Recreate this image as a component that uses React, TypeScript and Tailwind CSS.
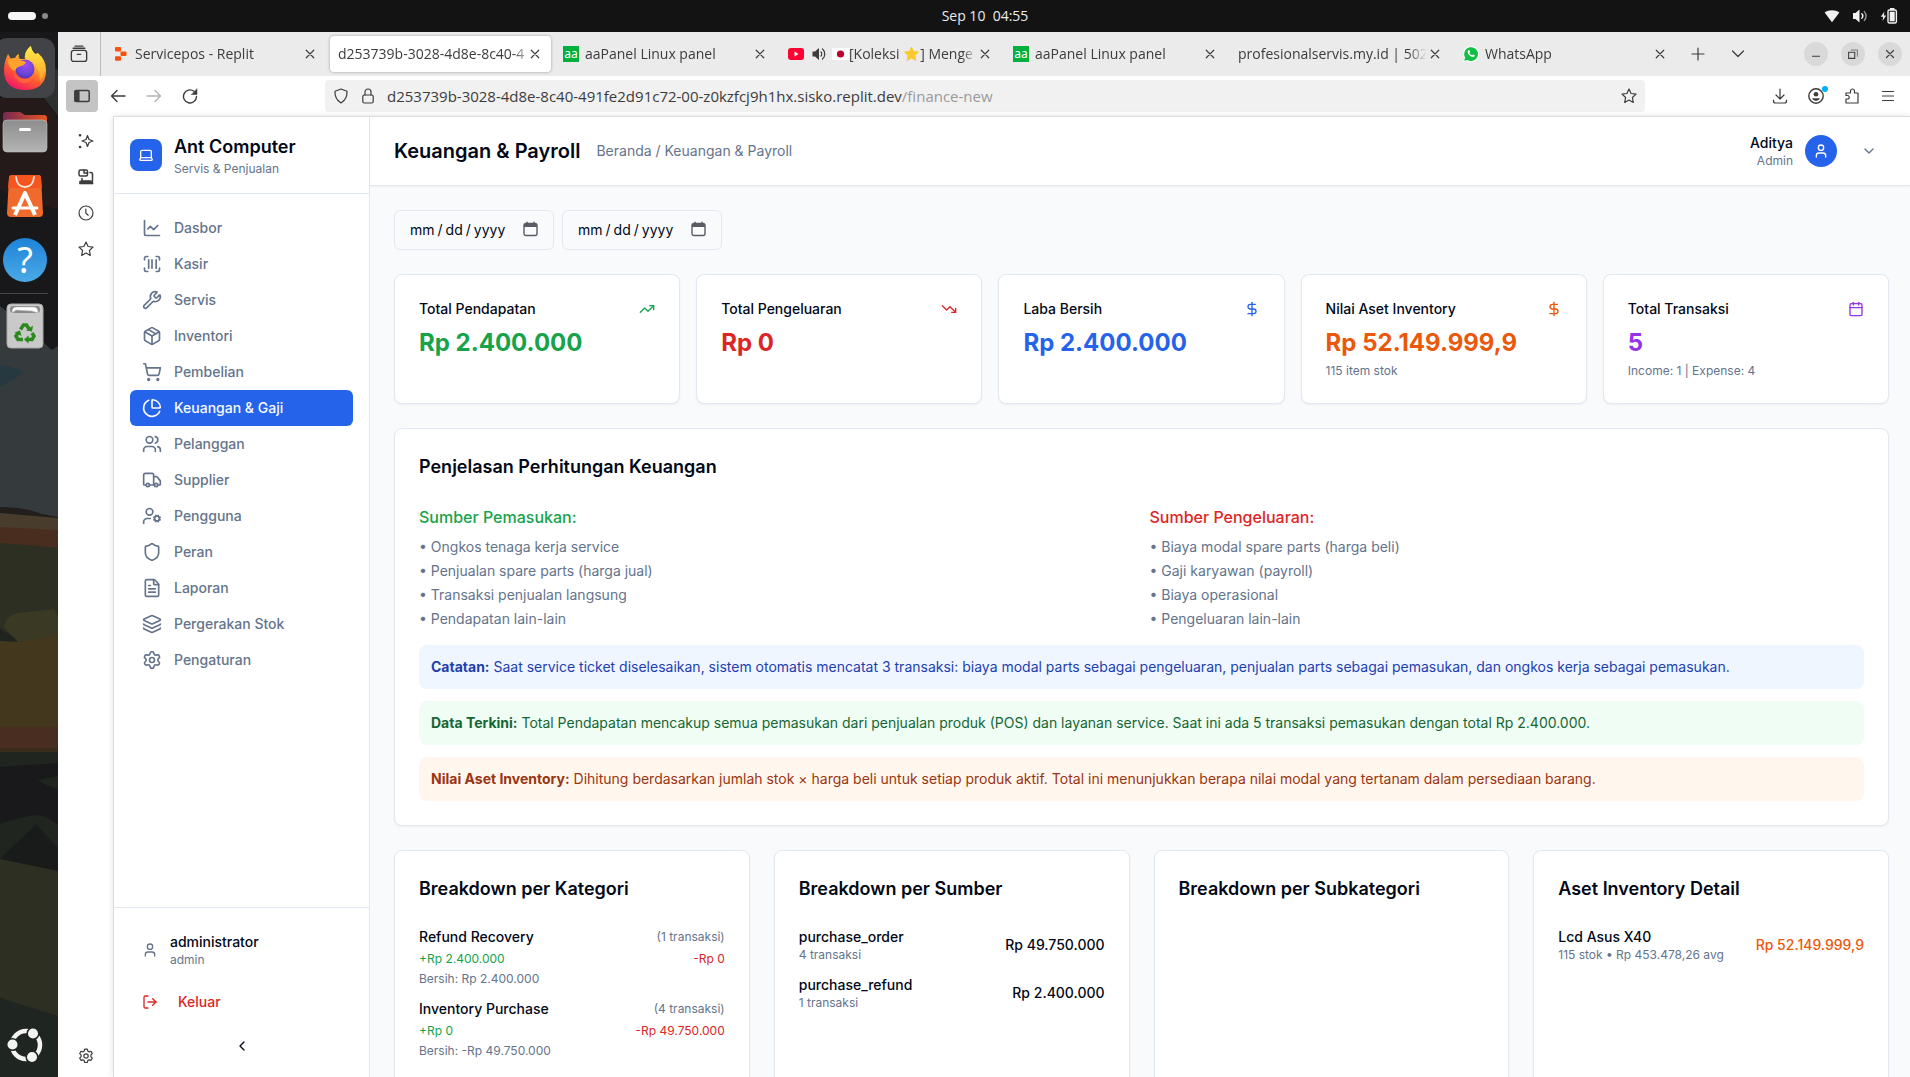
import type { ReactNode } from "react";
import {
  Calendar,
  ChartLine,
  ChartPie,
  ChevronDown,
  ChevronLeft,
  DollarSign,
  FileText,
  Laptop,
  Layers,
  LogOut,
  Package,
  ScanBarcode,
  Settings,
  Shield,
  ShoppingCart,
  TrendingDown,
  TrendingUp,
  Truck,
  User,
  UserCog,
  Users,
  Wrench,
} from "lucide-react";

/* ---------- Desktop: top bar and dock ---------- */

function TopBar() {
  return (
    <header className="relative flex h-8 shrink-0 items-center justify-between bg-[#131313] px-2 text-white">
      <button aria-label="Activities" className="flex items-center gap-1.5">
        <span className="h-2 w-7 rounded-full bg-[#f6f6f6]" />
        <span className="size-1.5 rounded-full bg-[#8a8a8a]" />
      </button>
      <button className="absolute left-1/2 -translate-x-1/2 whitespace-pre pl-[60px] font-['Open_Sans','Noto_Sans',sans-serif] text-sm text-[#ececec]">
        Sep 10{"  "}04:55
      </button>
      <button aria-label="System menu" className="flex items-center gap-3 pr-1">
        <svg width="16" height="16" viewBox="0 0 16 16" fill="#f2f2f2">
          <path d="M.6 4.600C4.800 1.400 11.200 1.400 15.400 4.600L8 14.200z" />
        </svg>
        <svg width="16" height="16" viewBox="0 0 16 16" fill="none" stroke="#f2f2f2" strokeLinecap="round">
          <path d="M1 5h2.500L7.500 1.500v13L3.500 11H1z" fill="#f2f2f2" stroke="none" />
          <path d="M9.800 5.800c1.200 1.200 1.200 3.200 0 4.400" strokeWidth="1.400" />
          <path d="M12.300 3.600c2.300 2.500 2.300 6.300 0 8.800" strokeWidth="1.400" opacity=".6" />
        </svg>
        <svg width="18" height="16" viewBox="0 0 18 16" fill="#f2f2f2">
          <path d="M4.500 3.500L.8 8.800h2.400L2.500 13l3.700-5.500H3.800z" />
          <rect x="8" y="2" width="8.400" height="13" rx="1.500" fill="none" stroke="#f2f2f2" strokeWidth="1.400" />
          <rect x="9.700" y="3.700" width="5" height="9.600" />
          <rect x="10" y="0" width="4.400" height="2" />
        </svg>
      </button>
    </header>
  );
}

function Wallpaper() {
  return (
    <svg className="absolute inset-0 h-full w-full" viewBox="0 32 58 1045" preserveAspectRatio="xMidYMin slice" aria-hidden="true">
      <rect y="32" width="58" height="1045" fill="#18181a" />
      <path d="M0 98h44l14 22v90L0 190z" fill="#231a19" />
      <path d="M40 60l18 10v46L44 98z" fill="#2c3130" />
      <path d="M0 306l52 44 6-4v180L0 515z" fill="#353b3c" />
      <path d="M0 365q14 2 24 7-10 8-24 15z" fill="#263840" />
      <path d="M0 507q24 0 42 7l16 3v16H0z" fill="#211e1b" />
      <path d="M0 513l58 5v14H0z" fill="#483d2c" />
      <path d="M0 527l58 3v18H0z" fill="#492e20" />
      <path d="M0 543l40 3 18 2v130H0z" fill="#2c2f22" />
      <path d="M0 628l20 14h38v12H0z" fill="#20241e" />
      <path d="M4 627q2-12 14-14l36-4 4 8v22l-40 3z" fill="#3a3924" />
      <path d="M0 641l20 1 36-7 2 2v92H0z" fill="#43381e" />
      <path d="M0 727h58v22H0z" fill="#482d20" />
      <path d="M0 748h58v4H0z" fill="#3a2c1d" />
      <path d="M0 752h58v140H0z" fill="#20251f" />
      <path d="M0 767l58-4v13l-20 4q6 5 20 9v36q-12-10-22-10Q20 817 0 824z" fill="#19191b" />
      <path d="M0 860l8 2 10 4-18 8z" fill="#38382a" />
      <path d="M36 824l22 24v24L0 859z" fill="#191b1a" />
      <path d="M0 859l58 12v146L0 998z" fill="#2d2f22" />
      <path d="M0 998l58 18v61H0z" fill="#1f2520" />
    </svg>
  );
}

function FirefoxIcon() {
  return (
    <svg width="44" height="46" viewBox="0 0 44 46">
      <defs>
        <linearGradient id="ffBody" x1=".8" y1="0" x2=".25" y2="1">
          <stop offset="0" stopColor="#fff44f" />
          <stop offset=".35" stopColor="#ffb52b" />
          <stop offset=".65" stopColor="#ff5a2f" />
          <stop offset="1" stopColor="#f0126e" />
        </linearGradient>
        <radialGradient id="ffGlobe" cx=".55" cy=".3" r=".8">
          <stop offset="0" stopColor="#a14bf0" />
          <stop offset=".6" stopColor="#6b45d8" />
          <stop offset="1" stopColor="#4b2aa6" />
        </radialGradient>
        <linearGradient id="ffTail" x1="0" y1="0" x2="0" y2="1">
          <stop offset="0" stopColor="#fff14a" />
          <stop offset="1" stopColor="#ff9a2b" />
        </linearGradient>
      </defs>
      <path
        d="M5 9l3 5q2-1 4-1 1-3 4-4-1 3 1 5h5q-1-5 2-9 2-3 4-4 0 4 4 8l3-1q8 7 8 17 0 20-21 20Q1 45 1 25 1 17 5 9z"
        fill="url(#ffBody)"
      />
      <path d="M22 13q0-7 6-12 0 4 4 8 8 7 9 15 0 7-4 12 0-16-15-23z" fill="url(#ffTail)" />
      <circle cx="22" cy="24" r="9.500" fill="url(#ffGlobe)" />
      <path d="M5 15q4-3 9-1l9 3q-1 3-5 4-5 1-6 5Q5 24 5 15z" fill="#ffa22e" />
      <path d="M10 26q4 9 13 8 6 0 9-6-2 10-12 10-8-1-10-12z" fill="#ff7139" opacity=".7" />
    </svg>
  );
}

function FilesIcon() {
  return (
    <svg width="46" height="42" viewBox="0 0 46 42">
      <defs>
        <linearGradient id="flBack" x1="0" x2="1">
          <stop offset="0" stopColor="#772953" />
          <stop offset="1" stopColor="#e95420" />
        </linearGradient>
        <linearGradient id="flFront" x1="0" y1="0" x2="0" y2="1">
          <stop offset="0" stopColor="#8d8d8d" />
          <stop offset="1" stopColor="#b4b4b4" />
        </linearGradient>
      </defs>
      <path d="M1 4q0-3 3-3h14l5 3h19q3 0 3 3v16H1z" fill="url(#flBack)" />
      <rect x="1" y="9" width="44" height="32" rx="4" fill="url(#flFront)" stroke="#c4c4c4" strokeWidth=".6" />
      <rect x="17" y="17" width="12" height="3" rx="1.500" fill="#fff" />
    </svg>
  );
}

function SoftwareIcon() {
  return (
    <svg width="38" height="44" viewBox="0 0 38 44">
      <path d="M6 1h26q3 0 3 3l2 35q0 4-4 4H5q-4 0-4-4L3 4q0-3 3-3z" fill="#f06a2d" />
      <path d="M6 1h26q3 0 3 3l1 10H2L3 4q0-3 3-3z" fill="#f4561d" />
      <path d="M10 3q1 10 9 10t9-10" fill="none" stroke="#fbe6dc" strokeWidth="1.800" strokeLinecap="round" />
      <g stroke="#fff" fill="none">
        <path d="M9 41l10-22 10 22" strokeWidth="4" strokeLinejoin="round" />
        <path d="M7 34h24" strokeWidth="3" strokeLinecap="round" />
      </g>
    </svg>
  );
}

function HelpIcon() {
  return (
    <span className="grid size-11 place-items-center rounded-full bg-linear-to-b from-[#1d83d8] to-[#4aa9e6] font-['Noto_Sans','Open_Sans',sans-serif] text-[36px] leading-none text-white">
      ?
    </span>
  );
}

function TrashIcon() {
  return (
    <svg width="38" height="46" viewBox="0 0 38 46">
      <rect x="1" y="1" width="36" height="44" rx="4" fill="#c9c9c9" stroke="#a9a9a9" />
      <rect x="4" y="3" width="30" height="7" rx="3" fill="#8a8a8a" />
      <path d="M6 10q0-6 4-6h18q4 0 4 6l-6-2-16-1z" fill="#fff" stroke="#bbb" strokeWidth=".6" />
      <g fill="none" stroke="#2a8a1c" strokeWidth="3.500">
        <path d="M14.500 26.500l3-4.500h3l2.500 4" />
        <path d="M26 30l2 3-2 3.500h-4" />
        <path d="M17 36.500h-5l-2-3.500 2-3" />
      </g>
      <path d="M20 27.500l6 1 1-6zM22.500 32.500v8l-4.500-4zM8.500 29.500l5.500-2 1.500 5.500z" fill="#2a8a1c" />
    </svg>
  );
}

function UbuntuIcon() {
  return (
    <svg width="36" height="36" viewBox="0 0 36 36">
      <circle cx="19" cy="18" r="14" fill="none" stroke="#f3f3f3" strokeWidth="4.500" />
      <g fill="#f3f3f3" stroke="#1f2520" strokeWidth="1.500">
        <circle cx="5.500" cy="17.500" r="5.800" />
        <circle cx="26" cy="6.500" r="5.800" />
        <circle cx="25" cy="30" r="5.800" />
      </g>
    </svg>
  );
}

function DockItem({ label, active, children }: { label: string; active?: boolean; children: ReactNode }) {
  return (
    <button aria-label={label} className="flex h-16 w-[50px] items-center justify-center">
      <span className={active ? "flex h-15 w-15 shrink-0 items-center justify-center rounded-xl bg-[#414346]" : "flex items-center justify-center"}>
        {children}
      </span>
    </button>
  );
}

function Dock() {
  return (
    <aside className="relative w-[58px] shrink-0 overflow-hidden">
      <Wallpaper />
      <div className="relative flex h-full flex-col pt-1">
        <DockItem label="Firefox" active><FirefoxIcon /></DockItem>
        <DockItem label="Files"><FilesIcon /></DockItem>
        <DockItem label="App Center"><SoftwareIcon /></DockItem>
        <DockItem label="Help"><HelpIcon /></DockItem>
        <hr className="mt-px w-12 border-[#46464a]" />
        <DockItem label="Trash"><TrashIcon /></DockItem>
        <div className="mt-auto">
          <DockItem label="Show Apps"><UbuntuIcon /></DockItem>
        </div>
      </div>
    </aside>
  );
}

/* ---------- Browser chrome ---------- */

function Glyph({ size = 16, children }: { size?: number; children: ReactNode }) {
  return (
    <svg
      width={size}
      height={size}
      viewBox="0 0 16 16"
      fill="none"
      stroke="currentColor"
      strokeWidth="1.200"
      strokeLinecap="round"
      strokeLinejoin="round"
      className="shrink-0"
      aria-hidden="true"
    >
      {children}
    </svg>
  );
}

const starPath = "M8 1l2.100 4.500 4.900.6-3.600 3.400.9 4.900L8 12l-4.300 2.400.9-4.900L1 6.100l4.900-.6z";
const gearPath =
  "M6.700 1.200h2.600l.5 1.900 1.300.8 1.900-.6 1.300 2.300-1.400 1.300v1.800l1.400 1.400-1.300 2.200-1.900-.5-1.300.8-.5 1.900H6.700l-.5-1.900-1.300-.8-1.900.5-1.300-2.200 1.400-1.400V6.900L1.700 5.600 3 3.300l1.900.6 1.300-.8z";

const replitIcon = (
  <span className="flex size-4 shrink-0 items-center justify-center">
    <svg width="12" height="14" viewBox="0 0 12 14">
      <g fill="#f9500a">
        <rect x="0" y="0" width="6" height="4.500" rx="1" />
        <rect x="5.500" y="4.600" width="6" height="4.500" rx="1" />
        <rect x="0" y="9.300" width="6" height="4.500" rx="1" />
      </g>
    </svg>
  </span>
);

const aaIcon = (
  <span className="flex size-4 shrink-0 items-center justify-center bg-[#00b03c] font-['Noto_Sans','Open_Sans',sans-serif] text-xs leading-none text-white">
    aa
  </span>
);

const youtubeIcons = (
  <span className="flex shrink-0 items-center gap-2">
    <svg width="16" height="12" viewBox="0 0 16 12">
      <rect width="16" height="12" rx="3" fill="#f03" />
      <path d="M6.500 3.500v5L10.500 6z" fill="#fff" />
    </svg>
    <svg width="14" height="14" viewBox="0 0 14 14" fill="none" stroke="#3c3c3c" strokeLinecap="round">
      <path d="M.5 4.500h2.500L7 1v12L3 9.500H.5z" fill="#3c3c3c" stroke="none" />
      <path d="M9 5c1 1 1 3 0 4M10.500 2c3 2.500 3 7.500 0 10" strokeWidth="1.200" />
    </svg>
  </span>
);

const whatsappIcon = (
  <svg width="16" height="16" viewBox="0 0 16 16" className="shrink-0">
    <path d="M0 16l1.200-4A8 8 0 1 1 4 14.900z" fill="#fff" />
    <path d="M1.200 14.800l.9-3.300a6.900 6.900 0 1 1 2.500 2.500z" fill="#12bf42" />
    <path
      d="M5.500 4.300c.3-.3.800-.3 1 .1l.6 1.400c.1.300-.5.900-.6 1.100.5 1.100 1.300 1.900 2.500 2.400.3-.2.800-1 1.100-.9l1.500.8c.3.200.1 1-.3 1.400-.7.700-1.900.7-3.700-.3C5.800 9.200 4.700 7.500 4.700 6c0-.7.300-1.300.8-1.700z"
      fill="#fff"
    />
  </svg>
);

type Tab = { key: string; icon?: ReactNode; title: ReactNode; active?: boolean };

const tabs: Tab[] = [
  { key: "replit", icon: replitIcon, title: "Servicepos - Replit" },
  { key: "app", title: "d253739b-3028-4d8e-8c40-4", active: true },
  { key: "panel-1", icon: aaIcon, title: "aaPanel Linux panel" },
  {
    key: "video",
    icon: youtubeIcons,
    title: (
      <span className="flex items-center">
        <svg width="17" height="12" viewBox="0 0 17 12" className="shrink-0" aria-label="Jepang">
          <rect width="17" height="12" fill="#fff" />
          <circle cx="8.500" cy="6" r="3.600" fill="#bd0029" />
        </svg>
        [Koleksi&nbsp;
        <svg width="17" height="16" viewBox="0 0 16 16" className="shrink-0" aria-hidden="true">
          <path d={starPath} fill="#fdc92f" stroke="#fdc92f" strokeLinejoin="round" />
        </svg>
        ] Menge
      </span>
    ),
  },
  { key: "panel-2", icon: aaIcon, title: "aaPanel Linux panel" },
  { key: "servis", title: "profesionalservis.my.id | 502" },
  { key: "wa", icon: whatsappIcon, title: "WhatsApp" },
];

function TabStrip() {
  return (
    <div className="flex h-11 shrink-0 items-center bg-[#ebebeb] pr-2 text-[#3c3c3c]">
      <div className="flex h-full w-[43px] shrink-0 items-center justify-center border-r border-[#bcbcbc]">
        <button aria-label="Firefox View">
          <Glyph size={18}>
            <rect x="1.200" y="4.800" width="13.600" height="9.800" rx="2" />
            <path d="M2.800 2.900h10.400M4.500 1h7M6.500 8.300h3" />
          </Glyph>
        </button>
      </div>
      <div className="flex h-full min-w-0 flex-1 items-center pl-0.5">
        {tabs.map((tab) => (
          <div key={tab.key} className="flex h-9 min-w-0 flex-1 px-0.5">
            <div
              className={
                tab.active
                  ? "flex min-w-0 flex-1 items-center rounded bg-white pl-2 pr-2.5 shadow-[0_0_3px_rgba(0,0,0,0.35)]"
                  : "flex min-w-0 flex-1 items-center gap-1.5 pl-2 pr-2.5"
              }
            >
              {tab.icon}
              <a
                href="#"
                className="min-w-0 flex-1 overflow-hidden whitespace-nowrap mask-r-from-90% text-sm"
              >
                {tab.title}
              </a>
              <button aria-label="Close tab" className="-ml-1">
                <Glyph size={12}>
                  <path d="M3 3l10 10M13 3L3 13" strokeWidth="1.600" />
                </Glyph>
              </button>
            </div>
          </div>
        ))}
      </div>
      <div className="flex w-[72px] shrink-0 items-center gap-6 pl-3">
        <button aria-label="New tab">
          <Glyph><path d="M8 2v12M2 8h12" /></Glyph>
        </button>
        <button aria-label="List all tabs">
          <Glyph><path d="M2.500 5L8 10.500 13.500 5" /></Glyph>
        </button>
      </div>
      <div className="ml-[54px] flex shrink-0 items-center gap-[13px]">
        <button aria-label="Minimize" className="grid size-6 place-items-center rounded-full bg-[#d9d9d9]">
          <Glyph size={14}><path d="M4 10.500h8" /></Glyph>
        </button>
        <button aria-label="Restore" className="grid size-6 place-items-center rounded-full bg-[#d9d9d9]">
          <Glyph size={14}>
            <path d="M3 6h7v7H3z" strokeLinejoin="miter" />
            <path d="M6 3.500h7v7" opacity=".6" />
          </Glyph>
        </button>
        <button aria-label="Close" className="grid size-6 place-items-center rounded-full bg-[#d9d9d9]">
          <Glyph size={14}><path d="M4 4l8 8M12 4l-8 8" strokeWidth="1.400" /></Glyph>
        </button>
      </div>
    </div>
  );
}

function NavBar() {
  return (
    <div className="flex h-10 shrink-0 items-center bg-white pl-2 pr-[14px] text-[#3c3c3c]">
      <button aria-label="Sidebar" className="grid size-8 place-items-center rounded bg-[#c4c4c4]">
        <Glyph>
          <rect x=".8" y="2.500" width="14.400" height="11" rx="1.500" strokeWidth="1.500" />
          <path d="M1 3h4v10H1z" fill="currentColor" />
        </Glyph>
      </button>
      <div className="flex w-[227px] shrink-0 items-center gap-5 pl-3">
        <button aria-label="Back">
          <Glyph><path d="M15 8H1.500M7 2.500L1.500 8 7 13.500" strokeWidth="1.400" /></Glyph>
        </button>
        <button aria-label="Forward" disabled className="text-[#b4b4b4]">
          <Glyph><path d="M1 8h13.500M9 2.500L14.500 8 9 13.500" strokeWidth="1.400" /></Glyph>
        </button>
        <button aria-label="Reload">
          <Glyph>
            <path d="M14.500 8.500A6.500 6.500 0 1 1 12 3.300" strokeWidth="1.400" />
            <path d="M15 1v5.500H9.500z" fill="currentColor" strokeWidth=".5" />
          </Glyph>
        </button>
      </div>
      <div className="flex h-8 min-w-0 flex-1 items-center gap-[11px] rounded bg-[#f1f1f1] px-2">
        <Glyph><path d="M8 1l6 2.300c.3 5.300-1.500 9-6 11.700C3.500 12.300 1.700 8.600 2 3.300z" /></Glyph>
        <Glyph>
          <rect x="2.800" y="7" width="10.400" height="8" rx="1.500" />
          <path d="M5 7V4a3 3 0 0 1 6 0v3" />
        </Glyph>
        <a href="#" className="min-w-0 flex-1 truncate text-[15px]">
          d253739b-3028-4d8e-8c40-491fe2d91c72-00-z0kzfcj9h1hx.sisko.replit.dev
          <span className="text-[#9a9a9a]">/finance-new</span>
        </a>
        <button aria-label="Bookmark this page"><Glyph><path d={starPath} /></Glyph></button>
      </div>
      <div className="ml-[127px] flex shrink-0 items-center gap-5">
        <button aria-label="Downloads">
          <Glyph><path d="M8 1v9.500M4 7l4 4 4-4M1.500 12v1a2 2 0 0 0 2 2h9a2 2 0 0 0 2-2v-1" /></Glyph>
        </button>
        <button aria-label="Account" className="relative">
          <Glyph>
            <circle cx="8" cy="8" r="7.200" strokeWidth="1.400" />
            <circle cx="8" cy="6.300" r="2.300" fill="currentColor" stroke="none" />
            <path d="M4 10.300h8q-1 2.700-4 2.700t-4-2.700z" fill="currentColor" stroke="none" />
          </Glyph>
          <span className="absolute -right-1 -top-0.5 size-1.5 rounded-full bg-[#00b0ff]" />
        </button>
        <button aria-label="Extensions">
          <Glyph><path d="M2 15h12V5h-3.500V3a2 2 0 0 0-4 0v2H2v2.500h1.500a1.700 1.700 0 0 1 0 3.500H2z" /></Glyph>
        </button>
        <button aria-label="Application menu">
          <Glyph><path d="M2.500 3.500h11M2.500 8h11M2.500 12.500h11" /></Glyph>
        </button>
      </div>
    </div>
  );
}

function BrowserRail() {
  return (
    <nav aria-label="Browser tools" className="flex w-[55px] shrink-0 flex-col items-center bg-white pb-[13px] pt-[17px] text-[#3c3c3c]">
      <div className="flex flex-col gap-5">
        <button aria-label="AI chatbot">
          <Glyph>
            <path d="M9.500 2.500l1.500 4 4 1.500-4 1.500-1.500 4-1.500-4L4 8l4-1.500z" />
            <path d="M2 2.200h.1M2 14h.1" strokeWidth="2.600" />
          </Glyph>
        </button>
        <button aria-label="Synced tabs">
          <Glyph>
            <rect x="1" y="1" width="8.500" height="6" rx="1.500" strokeWidth="1.500" />
            <path d="M6 1v3h3.500M4 9.500v2.500M12 3.500h1q1.500 0 1.500 1.500v6.500" strokeWidth="1.500" />
            <path d="M4 11.500h8.500l2.500 1v2.500H1.500v-2.500z" fill="currentColor" strokeWidth=".6" />
          </Glyph>
        </button>
        <button aria-label="History">
          <Glyph>
            <circle cx="8" cy="8" r="7" />
            <path d="M7.800 4v4l2.400 2.200" />
          </Glyph>
        </button>
        <button aria-label="Bookmarks"><Glyph><path d={starPath} /></Glyph></button>
      </div>
      <button aria-label="Customize sidebar" className="mt-auto">
        <Glyph>
          <path d={gearPath} />
          <circle cx="8" cy="8" r="2.200" />
        </Glyph>
      </button>
    </nav>
  );
}

/* ---------- Web app ---------- */

const menu = [
  { label: "Dasbor", Icon: ChartLine },
  { label: "Kasir", Icon: ScanBarcode },
  { label: "Servis", Icon: Wrench },
  { label: "Inventori", Icon: Package },
  { label: "Pembelian", Icon: ShoppingCart },
  { label: "Keuangan & Gaji", Icon: ChartPie, active: true },
  { label: "Pelanggan", Icon: Users },
  { label: "Supplier", Icon: Truck },
  { label: "Pengguna", Icon: UserCog },
  { label: "Peran", Icon: Shield },
  { label: "Laporan", Icon: FileText },
  { label: "Pergerakan Stok", Icon: Layers },
  { label: "Pengaturan", Icon: Settings },
];

function AppSidebar() {
  return (
    <aside className="flex w-64 shrink-0 flex-col border-r border-[#e2e8f0] bg-white">
      <div className="flex items-center gap-3 border-b border-[#e2e8f0] p-4">
        <span className="grid size-8 place-items-center rounded-lg bg-[#2563eb] text-white">
          <Laptop size={16} />
        </span>
        <div>
          <h1 className="text-lg font-semibold leading-7">Ant Computer</h1>
          <p className="text-xs text-[#64748b]">Servis &amp; Penjualan</p>
        </div>
      </div>
      <nav aria-label="Menu utama" className="flex-1 p-4">
        <ul>
          {menu.map(({ label, Icon, active }) => (
            <li key={label}>
              <a
                href="#"
                className={
                  active
                    ? "flex h-9 items-center gap-3 rounded-md bg-[#2563eb] px-3 text-sm font-medium text-[#f8fafc]"
                    : "flex h-9 items-center gap-3 rounded-md px-3 text-sm font-medium text-[#64748b]"
                }
              >
                <Icon size={20} />
                {label}
              </a>
            </li>
          ))}
        </ul>
      </nav>
      <div className="flex flex-col gap-2 border-t border-[#e2e8f0] px-4 pb-[13px] pt-4">
        <div className="flex items-center gap-3 px-3 py-2">
          <User size={16} className="text-[#64748b]" />
          <div>
            <p className="text-sm font-medium">administrator</p>
            <p className="text-xs text-[#64748b]">admin</p>
          </div>
        </div>
        <button className="flex h-9 items-center gap-5 px-3 text-sm font-medium text-[#dc2626]">
          <LogOut size={16} />
          Keluar
        </button>
        <button aria-label="Ciutkan menu" className="flex h-9 items-center justify-center">
          <ChevronLeft size={16} />
        </button>
      </div>
    </aside>
  );
}

function AppHeader() {
  return (
    <header className="relative flex h-[69px] shrink-0 items-center justify-between border-b border-[#e2e8f0] bg-white pl-6 pr-[21px] shadow-xs">
      <div className="flex items-center gap-4">
        <h2 className="text-xl font-semibold">Keuangan &amp; Payroll</h2>
        <nav aria-label="Breadcrumb" className="text-sm text-[#64748b]">
          <a href="#">Beranda</a> / Keuangan &amp; Payroll
        </nav>
      </div>
      <div className="flex items-center gap-3">
        <div className="text-right">
          <p className="text-sm font-medium">Aditya</p>
          <p className="text-xs text-[#64748b]">Admin</p>
        </div>
        <span className="grid size-8 place-items-center rounded-full bg-[#2563eb] text-white">
          <User size={16} />
        </span>
        <button aria-label="Menu akun" className="p-3 text-[#64748b]">
          <ChevronDown size={16} />
        </button>
      </div>
    </header>
  );
}

function DateField({ label }: { label: string }) {
  return (
    <label className="relative flex w-40">
      <span className="sr-only">{label}</span>
      <input
        type="date"
        className="h-10 w-full rounded-md border border-[#e2e8f0] bg-[#f8fafc] pl-3.5 pr-3 text-sm lowercase [&::-webkit-calendar-picker-indicator]:opacity-0 [&::-webkit-datetime-edit-text]:px-[2px]"
      />
      <svg className="pointer-events-none absolute right-4 top-[11px]" width="15" height="16" viewBox="0 0 15 16" fill="none" aria-hidden="true">
        <rect x="1" y="2.500" width="13" height="12" rx="2" stroke="#5b5b66" strokeWidth="1.400" />
        <path d="M1 3h13v3H1zM3.300.8h1.500v2H3.300zM10.200.8h1.500v2h-1.500z" fill="#5b5b66" />
      </svg>
    </label>
  );
}

const stats = [
  { title: "Total Pendapatan", value: "Rp 2.400.000", Icon: TrendingUp, color: "text-[#16a34a]" },
  { title: "Total Pengeluaran", value: "Rp 0", Icon: TrendingDown, color: "text-[#dc2626]" },
  { title: "Laba Bersih", value: "Rp 2.400.000", Icon: DollarSign, color: "text-[#2563eb]" },
  { title: "Nilai Aset Inventory", value: "Rp 52.149.999,9", note: "115 item stok", Icon: DollarSign, color: "text-[#ea580c]" },
  { title: "Total Transaksi", value: "5", note: "Income: 1 | Expense: 4", Icon: Calendar, color: "text-[#9333ea]" },
];

function Card({ children }: { children: ReactNode }) {
  return <section className="rounded-lg border border-[#e2e8f0] bg-white p-6 shadow-xs">{children}</section>;
}

function SourceList({ title, color, items }: { title: string; color: string; items: string[] }) {
  return (
    <div>
      <h4 className={color}>{title}</h4>
      <ul className="mt-2 flex flex-col gap-1 text-sm text-[#64748b]">
        {items.map((item) => (
          <li key={item}>• {item}</li>
        ))}
      </ul>
    </div>
  );
}

function AmountRow({ name, note, amount, color }: { name: string; note: string; amount: string; color?: string }) {
  return (
    <li className="flex items-center justify-between text-sm font-medium">
      <div>
        <p>{name}</p>
        <p className="text-xs font-normal text-[#64748b]">{note}</p>
      </div>
      <span className={color}>{amount}</span>
    </li>
  );
}

const categories = [
  { name: "Refund Recovery", count: "(1 transaksi)", plus: "+Rp 2.400.000", minus: "-Rp 0", net: "Bersih: Rp 2.400.000" },
  { name: "Inventory Purchase", count: "(4 transaksi)", plus: "+Rp 0", minus: "-Rp 49.750.000", net: "Bersih: -Rp 49.750.000" },
];

function FinancePage() {
  return (
    <main className="flex min-h-0 flex-1 flex-col gap-6 overflow-hidden bg-[#f8fafc] pl-6 pr-[21px] pt-6">
      <div className="flex gap-2">
        <DateField label="Tanggal mulai" />
        <DateField label="Tanggal akhir" />
      </div>

      <div className="grid grid-cols-5 gap-4">
        {stats.map(({ title, value, note, Icon, color }) => (
          <Card key={title}>
            <div className="flex items-center justify-between pb-2">
              <h3 className="text-sm font-medium">{title}</h3>
              <Icon size={16} className={color} />
            </div>
            <p className={`text-2xl font-bold ${color}`}>{value}</p>
            <p className="mt-1 h-4 text-xs text-[#64748b]">{note}</p>
          </Card>
        ))}
      </div>

      <Card>
        <h3 className="text-lg font-semibold leading-7">Penjelasan Perhitungan Keuangan</h3>
        <div className="mt-6 grid grid-cols-2 gap-4">
          <SourceList
            title="Sumber Pemasukan:"
            color="font-medium text-[#16a34a]"
            items={["Ongkos tenaga kerja service", "Penjualan spare parts (harga jual)", "Transaksi penjualan langsung", "Pendapatan lain-lain"]}
          />
          <SourceList
            title="Sumber Pengeluaran:"
            color="font-medium text-[#dc2626]"
            items={["Biaya modal spare parts (harga beli)", "Gaji karyawan (payroll)", "Biaya operasional", "Pengeluaran lain-lain"]}
          />
        </div>
        <div className="mt-4 flex flex-col gap-3 text-sm">
          <p className="rounded-lg bg-[#eff6ff] p-3 text-[#1e40af]">
            <strong>Catatan:</strong> Saat service ticket diselesaikan, sistem otomatis mencatat 3 transaksi: biaya modal parts sebagai
            pengeluaran, penjualan parts sebagai pemasukan, dan ongkos kerja sebagai pemasukan.
          </p>
          <p className="rounded-lg bg-[#f0fdf4] p-3 text-[#166534]">
            <strong>Data Terkini:</strong> Total Pendapatan mencakup semua pemasukan dari penjualan produk (POS) dan layanan service. Saat
            ini ada 5 transaksi pemasukan dengan total Rp 2.400.000.
          </p>
          <p className="rounded-lg bg-[#fff7ed] p-3 text-[#9a3412]">
            <strong>Nilai Aset Inventory:</strong> Dihitung berdasarkan jumlah stok × harga beli untuk setiap produk aktif. Total ini
            menunjukkan berapa nilai modal yang tertanam dalam persediaan barang.
          </p>
        </div>
      </Card>

      <div className="grid min-h-[300px] shrink-0 grid-cols-4 gap-6">
        <Card>
          <h3 className="text-lg font-semibold leading-7">Breakdown per Kategori</h3>
          <ul className="mt-6 flex flex-col gap-3">
            {categories.map((c) => (
              <li key={c.name} className="flex flex-col gap-1 text-xs">
                <div className="flex items-center justify-between">
                  <span className="text-sm font-medium">{c.name}</span>
                  <span className="text-[#64748b]">{c.count}</span>
                </div>
                <div className="flex justify-between">
                  <span className="text-[#16a34a]">{c.plus}</span>
                  <span className="text-[#dc2626]">{c.minus}</span>
                </div>
                <p className="text-[#64748b]">{c.net}</p>
              </li>
            ))}
          </ul>
        </Card>
        <Card>
          <h3 className="text-lg font-semibold leading-7">Breakdown per Sumber</h3>
          <ul className="mt-6 flex flex-col gap-3">
            <AmountRow name="purchase_order" note="4 transaksi" amount="Rp 49.750.000" />
            <AmountRow name="purchase_refund" note="1 transaksi" amount="Rp 2.400.000" />
          </ul>
        </Card>
        <Card>
          <h3 className="text-lg font-semibold leading-7">Breakdown per Subkategori</h3>
        </Card>
        <Card>
          <h3 className="text-lg font-semibold leading-7">Aset Inventory Detail</h3>
          <ul className="mt-6">
            <AmountRow name="Lcd Asus X40" note="115 stok • Rp 453.478,26 avg" amount="Rp 52.149.999,9" color="text-[#ea580c]" />
          </ul>
        </Card>
      </div>
    </main>
  );
}

export default function App() {
  return (
    <div className="flex h-screen flex-col overflow-hidden bg-white">
      <TopBar />
      <div className="flex min-h-0 flex-1">
        <Dock />
        <div className="flex min-w-0 flex-1 flex-col font-['Open_Sans','Noto_Sans',sans-serif]">
          <TabStrip />
          <NavBar />
          <div className="flex min-h-0 flex-1">
            <BrowserRail />
            <div className="flex min-w-0 flex-1 border-l border-t border-[#dcdce0] font-['Inter',sans-serif] text-[#020817] shadow-[0_0_6px_rgba(0,0,0,0.12)]">
              <AppSidebar />
              <div className="flex min-w-0 flex-1 flex-col">
                <AppHeader />
                <FinancePage />
              </div>
            </div>
          </div>
        </div>
      </div>
    </div>
  );
}
